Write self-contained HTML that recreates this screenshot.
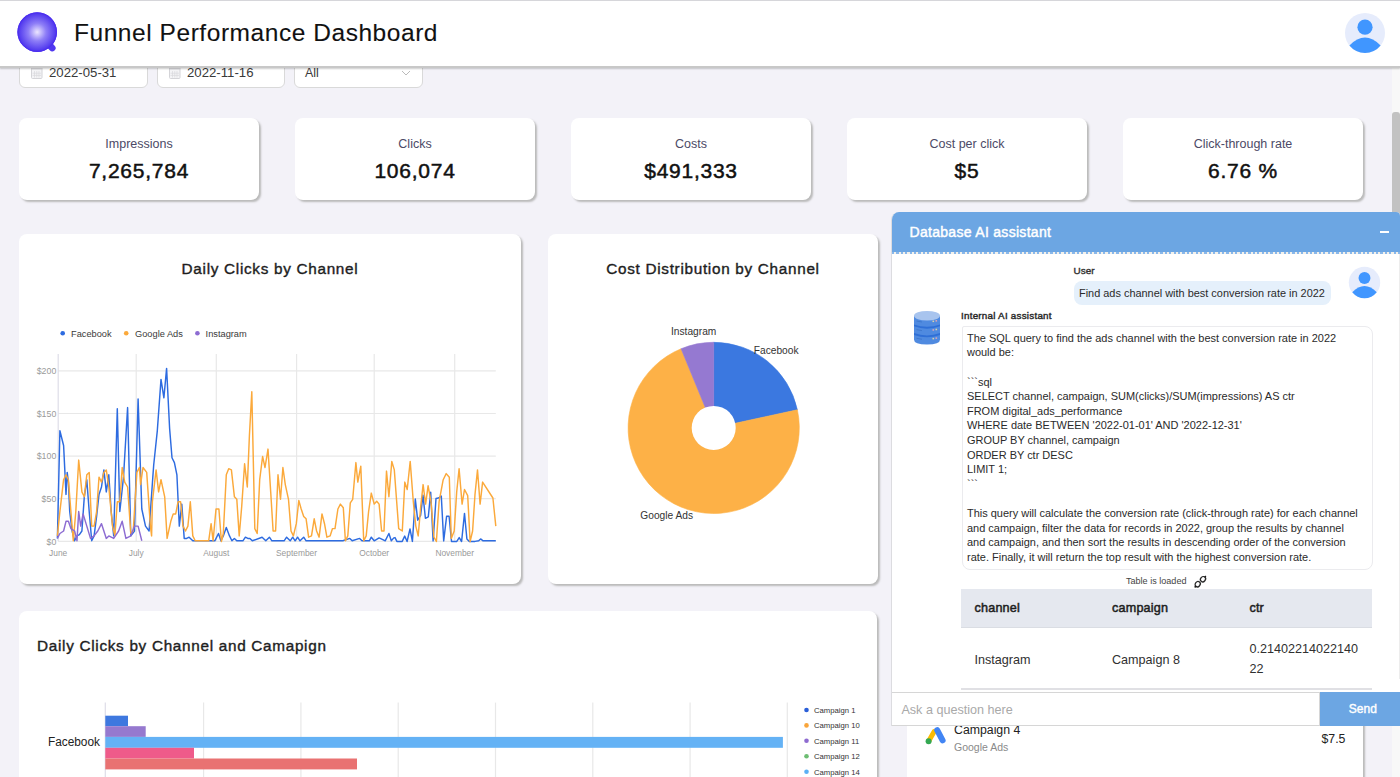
<!DOCTYPE html>
<html><head><meta charset="utf-8">
<style>
*{box-sizing:border-box;margin:0;padding:0}
html,body{width:1400px;height:777px;overflow:hidden}
body{background:#f3f2f8;font-family:"Liberation Sans",sans-serif;color:#1a1a1a;position:relative}
.abs{position:absolute}
.t{position:absolute;white-space:nowrap;line-height:1}
#topline{left:0;top:0;width:1400px;height:1px;background:#d6d6da;z-index:6}
#header{left:0;top:1px;width:1400px;height:67px;background:#fff;border-bottom:2px solid #c8c8c8;box-shadow:0 1px 1.5px rgba(0,0,0,0.2);z-index:5}
.inp{top:50px;height:38px;background:#fff;border:1px solid #d9d9d9;border-radius:6px}
.card{background:#fff;border-radius:8px;box-shadow:2px 2px 2px #bababa}
.kpi{top:118px;width:240px;height:82px}
.kpi .l{position:absolute;left:0;width:100%;text-align:center;top:20px;font-size:12.5px;line-height:1;color:#4c4a66}
.kpi .v{position:absolute;left:0;width:100%;text-align:center;top:160px;font-size:21px;line-height:1;color:#111;-webkit-text-stroke:0.5px #111;letter-spacing:0.75px}
.ctitle{position:absolute;font-size:15.3px;line-height:1;color:#1e1e1e;-webkit-text-stroke:0.38px #1e1e1e;white-space:nowrap;letter-spacing:0.7px}
.sb{-webkit-text-stroke:0.35px currentColor}
#chat{left:891px;top:212px;width:509px;height:514px;background:#fff;border-radius:8px 4px 0 0;z-index:10;border-left:1px solid #dcdce0;overflow:hidden}
#chathead{left:0;top:0;width:509px;height:40px;background:#6ca6e3}
.msg{font-size:10.9px;line-height:14.6px;color:#2a2a2a}
</style></head><body>
<div id="topline" class="abs"></div>
<div id="header" class="abs">
  <svg class="abs" style="left:15px;top:9px" width="46" height="46" viewBox="0 0 46 46">
    <defs><radialGradient id="lg" cx="0.5" cy="0.5" r="0.5"><stop offset="0" stop-color="#ece6ff"/><stop offset="0.45" stop-color="#8e7ef7"/><stop offset="0.88" stop-color="#5841ef"/><stop offset="1" stop-color="#4a2cee"/></radialGradient></defs>
    <path d="M34.5 35.2 L37.2 38" stroke="#5038ef" stroke-width="6.8" stroke-linecap="round"/>
    <circle cx="22.2" cy="22.1" r="19.8" fill="url(#lg)"/>
    <circle cx="22.2" cy="22.1" r="19.3" fill="none" stroke="#4b2ff0" stroke-width="1"/>
  </svg>
  <div class="t" style="left:74px;top:20px;font-size:24.5px;letter-spacing:0.55px;color:#111;-webkit-text-stroke:0.1px #111">Funnel Performance Dashboard</div>
  <svg class="abs" style="left:1344px;top:11.3px" width="42" height="42" viewBox="0 0 42 42">
    <circle cx="21" cy="21" r="20" fill="#e6ecfc"/>
    <circle cx="21" cy="15.2" r="7.6" fill="#4096ff"/>
    <path d="M5.4 33.5 Q21 17.6 36.6 33.5 A20 20 0 0 1 5.4 33.5Z" fill="#4096ff"/>
  </svg>
</div>

<div class="abs inp" style="left:19px;width:129px">
  <svg class="abs" style="left:10.5px;top:15px" width="12" height="13" viewBox="0 0 12 13"><rect x="0.5" y="0.5" width="10.5" height="12" rx="1" fill="#f4f4f6" stroke="#d4d4d8"/><rect x="0.5" y="0.5" width="10.5" height="3" fill="#dcdce0"/><path d="M3.5 5 V11.5 M5.75 5 V11.5 M8 5 V11.5 M1.5 7.2 H10 M1.5 9.4 H10" stroke="#d8d8dc" stroke-width="0.7"/></svg>
  <div class="t" style="left:29px;top:15px;font-size:13.2px;color:#3a3a3a">2022-05-31</div>
</div>
<div class="abs inp" style="left:157px;width:128px">
  <svg class="abs" style="left:10.5px;top:15px" width="12" height="13" viewBox="0 0 12 13"><rect x="0.5" y="0.5" width="10.5" height="12" rx="1" fill="#f4f4f6" stroke="#d4d4d8"/><rect x="0.5" y="0.5" width="10.5" height="3" fill="#dcdce0"/><path d="M3.5 5 V11.5 M5.75 5 V11.5 M8 5 V11.5 M1.5 7.2 H10 M1.5 9.4 H10" stroke="#d8d8dc" stroke-width="0.7"/></svg>
  <div class="t" style="left:29px;top:15px;font-size:13.2px;color:#3a3a3a">2022-11-16</div>
</div>
<div class="abs inp" style="left:294px;width:129px">
  <div class="t" style="left:10px;top:16px;font-size:12.4px;color:#3a3a3a">All</div>
  <svg class="abs" style="left:106px;top:19px" width="10" height="6" viewBox="0 0 10 6"><path d="M1 1 L5 5 L9 1" fill="none" stroke="#bbb" stroke-width="1"/></svg>
</div>

<div class="abs card kpi" style="left:19px"><div class="l">Impressions</div><div class="v" style="top:41.5px">7,265,784</div></div>
<div class="abs card kpi" style="left:295px"><div class="l">Clicks</div><div class="v" style="top:41.5px">106,074</div></div>
<div class="abs card kpi" style="left:571px"><div class="l">Costs</div><div class="v" style="top:41.5px">$491,333</div></div>
<div class="abs card kpi" style="left:847px"><div class="l">Cost per click</div><div class="v" style="top:41.5px">$5</div></div>
<div class="abs card kpi" style="left:1123px"><div class="l">Click-through rate</div><div class="v" style="top:41.5px">6.76 %</div></div>

<div class="abs card" style="left:19px;top:233.5px;width:502px;height:350px">
  <div class="ctitle" style="left:0;width:100%;text-align:center;top:27.5px">Daily Clicks by Channel</div>
</div>
<div class="abs card" style="left:548px;top:233.5px;width:330px;height:350px">
  <div class="ctitle" style="left:0;width:100%;text-align:center;top:27.5px">Cost Distribution by Channel</div>
</div>
<div class="abs card" style="left:19px;top:611px;width:858px;height:220px">
  <div class="ctitle" style="left:18px;top:27px">Daily Clicks by Channel and Camapign</div>
</div>
<div class="abs card" style="left:907px;top:611px;width:456px;height:220px">
  <svg class="abs" style="left:17.5px;top:115.5px" width="22" height="18" viewBox="0 0 22 18">
    <path d="M3.6 14.2 L9.2 4.6" stroke="#fbbc04" stroke-width="5" stroke-linecap="round"/>
    <path d="M12.2 3.2 L17.6 13.4" stroke="#4285f4" stroke-width="6" stroke-linecap="round"/>
    <circle cx="3.6" cy="14.2" r="3" fill="#34a853"/>
  </svg>
  <div class="t" style="left:47px;top:113px;font-size:12.3px;color:#222">Campaign 4</div>
  <div class="t" style="left:47px;top:131px;font-size:10.5px;color:#8a8a8a">Google Ads</div>
  <div class="t" style="left:414.5px;top:121.5px;font-size:12.3px;color:#222">$7.5</div>
</div>

<svg class="abs" style="left:0;top:0;z-index:3" width="1400" height="777" viewBox="0 0 1400 777">
<line x1="58.2" y1="370.9" x2="495.8" y2="370.9" stroke="#e8e8e8" stroke-width="1.2"/>
<line x1="58.2" y1="413.5" x2="495.8" y2="413.5" stroke="#e8e8e8" stroke-width="1.2"/>
<line x1="58.2" y1="456.1" x2="495.8" y2="456.1" stroke="#e8e8e8" stroke-width="1.2"/>
<line x1="58.2" y1="498.7" x2="495.8" y2="498.7" stroke="#e8e8e8" stroke-width="1.2"/>
<line x1="58.2" y1="541.3" x2="495.8" y2="541.3" stroke="#e8e8e8" stroke-width="1.2"/>
<line x1="136.2" y1="354" x2="136.2" y2="541.3" stroke="#e8e8e8" stroke-width="1.2"/>
<line x1="216.3" y1="354" x2="216.3" y2="541.3" stroke="#e8e8e8" stroke-width="1.2"/>
<line x1="296.6" y1="354" x2="296.6" y2="541.3" stroke="#e8e8e8" stroke-width="1.2"/>
<line x1="374.2" y1="354" x2="374.2" y2="541.3" stroke="#e8e8e8" stroke-width="1.2"/>
<line x1="454.7" y1="354" x2="454.7" y2="541.3" stroke="#e8e8e8" stroke-width="1.2"/>
<line x1="58.2" y1="354" x2="58.2" y2="541.3" stroke="#dedde8" stroke-width="1.2"/>
<text x="56.3" y="374.1" text-anchor="end" font-size="8.8" fill="#9a9a9a" font-family="Liberation Sans">$200</text>
<text x="56.3" y="416.7" text-anchor="end" font-size="8.8" fill="#9a9a9a" font-family="Liberation Sans">$150</text>
<text x="56.3" y="459.3" text-anchor="end" font-size="8.8" fill="#9a9a9a" font-family="Liberation Sans">$100</text>
<text x="56.3" y="501.9" text-anchor="end" font-size="8.8" fill="#9a9a9a" font-family="Liberation Sans">$50</text>
<text x="56.3" y="544.5" text-anchor="end" font-size="8.8" fill="#9a9a9a" font-family="Liberation Sans">$0</text>
<text x="58.2" y="555.6" text-anchor="middle" font-size="8.4" fill="#9a9a9a" font-family="Liberation Sans">June</text>
<text x="136.2" y="555.6" text-anchor="middle" font-size="8.4" fill="#9a9a9a" font-family="Liberation Sans">July</text>
<text x="216.3" y="555.6" text-anchor="middle" font-size="8.4" fill="#9a9a9a" font-family="Liberation Sans">August</text>
<text x="296.5" y="555.6" text-anchor="middle" font-size="8.4" fill="#9a9a9a" font-family="Liberation Sans">September</text>
<text x="374.2" y="555.6" text-anchor="middle" font-size="8.4" fill="#9a9a9a" font-family="Liberation Sans">October</text>
<text x="454.7" y="555.6" text-anchor="middle" font-size="8.4" fill="#9a9a9a" font-family="Liberation Sans">November</text>
<circle cx="62.7" cy="333.3" r="2.3" fill="#2d6be0"/>
<text x="71" y="336.6" font-size="9.25" fill="#3a3a3a" font-family="Liberation Sans">Facebook</text>
<circle cx="126.2" cy="333.3" r="2.3" fill="#fba93b"/>
<text x="135" y="336.6" font-size="9.25" fill="#3a3a3a" font-family="Liberation Sans">Google Ads</text>
<circle cx="197.4" cy="333.3" r="2.3" fill="#8d6cd2"/>
<text x="205.6" y="336.6" font-size="9.25" fill="#3a3a3a" font-family="Liberation Sans">Instagram</text>
<polyline points="57.4,538.4 59.9,430.8 63.6,445.5 64.8,469.9 66.0,494.4 67.2,472.4 68.4,482.1 69.7,511.5 72.1,531.0 74.6,540.8 77.0,535.9 79.4,534.7 81.9,531.0 84.3,496.8 86.8,479.7 89.2,511.5 91.7,540.8 94.1,535.9 96.6,516.4 99.0,494.4 101.5,487.0 103.9,469.9 106.3,491.9 108.8,474.8 111.2,511.5 113.7,535.9 117.3,408.8 119.8,511.5 123.5,477.2 127.6,407.6 130.8,535.9 134.5,531.0 138.1,399.0 141.8,509.0 145.5,526.1 149.1,531.0 152.8,477.2 153.7,465.0 157.3,430.8 161.0,379.4 163.9,397.8 166.6,368.4 169.6,428.3 172.0,457.7 174.4,462.6 176.9,474.8 179.3,526.1 181.8,504.1 184.2,538.4 186.7,538.4 189.1,537.2 192.8,540.8 208.7,540.8 214.8,540.8 218.5,533.5 220.9,540.8 223.3,535.9 226.3,527.4 229.5,535.9 231.9,540.8 234.4,538.4 236.8,540.8 242.9,540.8 245.4,537.2 247.8,538.4 249.9,538.4 252.3,540.8 262.1,537.2 265.8,540.8 269.4,537.2 271.9,540.8 284.1,540.8 286.6,537.2 290.2,540.8 292.7,537.2 295.1,540.8 297.6,537.2 300.0,540.8 303.7,537.2 306.1,540.8 342.8,540.8 349.8,538.4 352.2,540.8 359.6,538.4 362.0,540.8 369.3,540.8 371.3,537.2 374.2,540.8 379.1,537.9 382.8,539.6 385.2,540.8 388.9,533.5 391.3,540.8 393.8,537.9 395.0,537.6 396.9,541.4 402.2,541.4 404.7,536.1 407.1,541.5 410.0,528.9 412.4,541.4 415.3,499.0 417.7,520.2 420.6,515.4 423.0,495.1 425.4,518.3 428.3,516.8 430.7,492.2 433.1,540.9 436.0,498.5 438.4,498.0 441.3,496.1 443.7,540.9 446.6,516.3 449.1,516.3 451.5,541.4 456.8,541.4 459.2,537.6 461.6,541.5 464.5,513.4 466.9,539.0 469.3,541.4 475.0,541.4 478.7,540.8 480.6,538.9 483.1,540.8 495.8,540.8" fill="none" stroke="#2d6be0" stroke-width="1.45" stroke-linejoin="round"/>
<polyline points="57.4,535.9 59.9,511.5 63.6,479.7 66.0,474.8 68.4,479.7 70.9,511.5 73.3,540.8 75.8,511.5 78.7,460.1 81.9,491.9 84.3,496.8 86.8,474.8 89.2,472.4 91.7,526.1 94.1,526.1 96.6,511.5 99.0,477.2 101.5,482.1 103.9,472.4 106.3,469.9 108.8,487.0 112.5,526.1 114.9,535.9 117.3,501.7 119.8,501.7 122.2,467.5 124.7,482.1 127.6,487.0 130.8,533.5 133.2,531.0 136.9,472.4 139.4,467.5 140.6,484.6 143.0,467.5 146.7,472.4 150.4,526.1 151.6,535.9 152.4,501.7 156.1,469.9 158.6,491.9 161.0,479.7 164.7,496.8 167.1,538.4 170.8,521.3 173.2,513.9 175.7,513.9 178.1,501.7 180.6,501.7 183.0,526.1 185.5,531.0 187.9,526.1 190.3,501.7 192.8,535.9 195.2,540.8 208.7,540.8 211.1,523.7 213.1,540.8 216.0,509.0 218.9,509.0 221.4,541.5 223.3,533.5 226.3,474.8 228.7,468.7 231.4,469.9 234.4,496.8 236.8,499.3 239.2,535.9 241.7,506.6 244.6,463.8 247.3,487.0 249.4,435.7 251.8,391.7 254.8,528.6 257.2,533.5 259.7,479.7 262.6,456.5 265.0,467.5 268.0,449.1 270.7,491.9 273.1,531.0 275.6,531.0 278.0,474.8 280.5,499.3 282.9,467.5 285.3,484.6 288.5,499.3 291.0,531.0 293.4,535.9 296.3,523.7 298.8,500.5 301.2,509.0 303.7,516.4 306.1,518.8 308.6,537.2 311.5,535.9 314.2,518.8 316.6,531.0 319.1,537.2 322.0,513.9 324.5,523.7 326.9,537.2 330.1,535.9 332.5,528.6 335.0,528.6 337.9,509.0 340.4,504.1 343.3,507.8 345.4,540.8 347.8,535.9 350.3,502.9 352.7,499.3 355.9,462.6 357.8,482.1 360.8,466.2 363.7,540.8 366.2,535.9 368.6,511.5 371.3,493.1 374.2,504.1 376.7,501.2 379.1,504.1 381.6,531.0 384.0,531.0 386.5,471.1 388.9,496.8 391.8,461.4 394.3,469.9 398.7,528.6 402.3,531.0 404.8,482.1 407.2,489.5 410.2,461.4 413.3,501.7 415.8,526.1 418.2,535.9 420.7,506.6 423.1,484.6 425.6,504.1 428.1,485.8 431.0,501.7 433.9,537.2 436.4,541.5 439.1,501.7 443.2,479.7 446.2,473.6 449.3,477.2 451.3,538.4 454.2,531.0 456.7,491.9 459.1,468.7 462.1,504.1 464.5,489.5 467.7,495.6 470.1,541.5 472.6,531.0 475.0,494.4 477.5,469.9 480.1,504.1 482.6,482.1 492.9,498.0 495.8,526.1" fill="none" stroke="#fba93b" stroke-width="1.45" stroke-linejoin="round"/>
<polyline points="57.4,538.4 59.9,533.5 63.6,531.0 66.0,521.3 68.4,521.3 70.9,528.6 74.6,531.0 77.0,540.8 78.7,511.5 80.7,526.1 83.1,513.9 86.8,526.1 90.5,538.4 94.1,535.9 97.8,531.0 101.5,523.7 106.3,538.4 108.8,535.9 113.7,538.4 118.6,531.0 122.2,521.3 125.9,538.4 130.8,535.9 134.5,526.1 138.1,526.1 141.8,540.8" fill="none" stroke="#8d6cd2" stroke-width="1.45" stroke-linejoin="round"/>
<path d="M713.70,427.90 L713.70,342.30 A85.6,85.6 0 0 1 797.37,409.81 Z" fill="#3b78e0" stroke="#3b78e0" stroke-width="0.6" stroke-linejoin="round"/>
<path d="M713.70,427.90 L797.37,409.81 A85.6,85.6 0 1 1 681.08,348.76 Z" fill="#fdb147" stroke="#fdb147" stroke-width="0.6" stroke-linejoin="round"/>
<path d="M713.70,427.90 L681.08,348.76 A85.6,85.6 0 0 1 713.70,342.30 Z" fill="#9579d1" stroke="#9579d1" stroke-width="0.6" stroke-linejoin="round"/>
<circle cx="713.7" cy="427.9" r="22" fill="#fff"/>
<text x="671" y="334.5" font-size="10.2" fill="#333" font-family="Liberation Sans">Instagram</text>
<text x="753.8" y="354.1" font-size="10.2" fill="#333" font-family="Liberation Sans">Facebook</text>
<text x="640.3" y="518.5" font-size="10.2" fill="#333" font-family="Liberation Sans">Google Ads</text>
<line x1="203.6" y1="702.6" x2="203.6" y2="777" stroke="#e8e8e8" stroke-width="1.2"/>
<line x1="300.9" y1="702.6" x2="300.9" y2="777" stroke="#e8e8e8" stroke-width="1.2"/>
<line x1="398.2" y1="702.6" x2="398.2" y2="777" stroke="#e8e8e8" stroke-width="1.2"/>
<line x1="495.5" y1="702.6" x2="495.5" y2="777" stroke="#e8e8e8" stroke-width="1.2"/>
<line x1="592.8" y1="702.6" x2="592.8" y2="777" stroke="#e8e8e8" stroke-width="1.2"/>
<line x1="690.1" y1="702.6" x2="690.1" y2="777" stroke="#e8e8e8" stroke-width="1.2"/>
<line x1="787.3" y1="702.6" x2="787.3" y2="777" stroke="#e8e8e8" stroke-width="1.2"/>
<line x1="105.3" y1="702.6" x2="105.3" y2="777" stroke="#dedde8" stroke-width="1.2"/>
<rect x="105.3" y="715.7" width="22.7" height="10.5" fill="#3e78df"/>
<rect x="105.3" y="726.2" width="40.4" height="10.7" fill="#9679cf"/>
<rect x="105.3" y="736.9" width="677.6" height="10.9" fill="#64b2f5"/>
<rect x="105.3" y="747.8" width="88.7" height="10.7" fill="#ef5b8a"/>
<rect x="105.3" y="758.5" width="251.7" height="10.9" fill="#e97272"/>
<text x="100" y="746" text-anchor="end" font-size="11.86" fill="#222" font-family="Liberation Sans">Facebook</text>
<circle cx="806.5" cy="710.0" r="2.3" fill="#2a5fd8"/>
<text x="814" y="712.8" font-size="7.7" fill="#333" font-family="Liberation Sans">Campaign 1</text>
<circle cx="806.5" cy="725.4" r="2.3" fill="#f9a53a"/>
<text x="814" y="728.2" font-size="7.7" fill="#333" font-family="Liberation Sans">Campaign 10</text>
<circle cx="806.5" cy="740.8" r="2.3" fill="#8e6bd0"/>
<text x="814" y="743.6" font-size="7.7" fill="#333" font-family="Liberation Sans">Campaign 11</text>
<circle cx="806.5" cy="756.3" r="2.3" fill="#6dbd72"/>
<text x="814" y="759.1" font-size="7.7" fill="#333" font-family="Liberation Sans">Campaign 12</text>
<circle cx="806.5" cy="771.7" r="2.3" fill="#5ab0f5"/>
<text x="814" y="774.5" font-size="7.7" fill="#333" font-family="Liberation Sans">Campaign 14</text>
</svg>

<div class="abs" style="left:1392px;top:68px;width:8px;height:709px;background:#f8f8f8;z-index:4"></div>
<div class="abs" style="left:1392px;top:111.5px;width:8px;height:360px;background:#c2c2c2;border-radius:3px 3px 0 0;z-index:4"></div>

<div id="chat" class="abs">
  <div id="chathead" class="abs">
    <div class="t" style="left:17.5px;top:13.2px;font-size:14px;color:#fff;-webkit-text-stroke:0.45px #fff;letter-spacing:0.3px">Database AI assistant</div>
    <div class="abs" style="left:488px;top:19px;width:9px;height:2px;background:#fff"></div>
  </div>
  <div class="abs" style="left:0;top:40px;width:509px;height:1.5px;background:repeating-linear-gradient(90deg,#8ab8ea 0 2.2px,#f4f1ea 2.2px 4.4px)"></div>
<div class="t" style="left:181.6px;top:53.6px;font-size:9.9px;color:#333;-webkit-text-stroke:0.4px #333">User</div>
<div class="abs" style="left:181.6px;top:69px;width:257px;height:24px;background:#e5f0fb;border-radius:8px"></div>
<div class="t" style="left:187.0px;top:76.1px;font-size:10.93px;color:#2a2a2a">Find ads channel with best conversion rate in 2022</div>
<svg class="abs" style="left:456.2px;top:53.9px" width="33" height="33" viewBox="0 0 42 42">
    <circle cx="21" cy="21" r="20" fill="#e6ecfc"/>
    <circle cx="21" cy="15.2" r="7.6" fill="#4096ff"/>
    <path d="M5.4 33.5 Q21 17.6 36.6 33.5 A20 20 0 0 1 5.4 33.5Z" fill="#4096ff"/>
  </svg>
<svg class="abs" style="left:21px;top:97.5px" width="28" height="35.5" viewBox="0 0 28 37" preserveAspectRatio="none">
  <path d="M1 6 L1 31 Q1 36 14 36 Q27 36 27 31 L27 6Z" fill="#4f8ae0"/>
  <path d="M1 15 Q14 20 27 15 L27 17 Q14 22 1 17Z" fill="#2f6fd6"/>
  <path d="M1 24 Q14 29 27 24 L27 26 Q14 31 1 26Z" fill="#2f6fd6"/>
  <ellipse cx="14" cy="6" rx="13" ry="5" fill="#a8c4ee"/>
  <rect x="19.5" y="11" width="1.6" height="1.6" fill="#d9d3a8"/><rect x="22.5" y="10.5" width="1.6" height="1.6" fill="#dba6b8"/><path d="M3.5 11.5 L9 12.5" stroke="#3b73c8" stroke-width="0.8"/>
  <rect x="19.5" y="20" width="1.6" height="1.6" fill="#dba6b8"/><rect x="22.5" y="19.5" width="1.6" height="1.6" fill="#d9d3a8"/><path d="M3.5 20.5 L9 21.5" stroke="#3b73c8" stroke-width="0.8"/>
  <rect x="19.5" y="29" width="1.6" height="1.6" fill="#d9d3a8"/><rect x="22.5" y="28.5" width="1.6" height="1.6" fill="#dba6b8"/><path d="M3.5 29.5 L9 30.5" stroke="#3b73c8" stroke-width="0.8"/>
</svg>
<div class="t" style="left:69.0px;top:98.6px;font-size:9.8px;color:#262626;-webkit-text-stroke:0.4px #262626;letter-spacing:0.25px">Internal AI assistant</div>
<div class="abs" style="left:69.6px;top:113.5px;width:411px;height:244px;border:1px solid #ebebee;border-radius:2px 8px 8px 8px"></div>
<div class="abs msg" style="left:75px;top:118.9px;font-size:10.98px;white-space:nowrap">The SQL query to find the ads channel with the best conversion rate in 2022<br>would be:<br>&nbsp;<br>```sql<br>SELECT channel, campaign, SUM(clicks)/SUM(impressions) AS ctr<br>FROM digital_ads_performance<br>WHERE date BETWEEN '2022-01-01' AND '2022-12-31'<br>GROUP BY channel, campaign<br>ORDER BY ctr DESC<br>LIMIT 1;<br>```<br>&nbsp;<br>This query will calculate the conversion rate (click-through rate) for each channel<br>and campaign, filter the data for records in 2022, group the results by channel<br>and campaign, and then sort the results in descending order of the conversion<br>rate. Finally, it will return the top result with the highest conversion rate.</div>
<div class="t" style="left:234.0px;top:365.3px;font-size:9.07px;color:#444">Table is loaded</div>
<svg class="abs" style="left:301px;top:362px" width="15" height="15" viewBox="0 0 15 15">
  <ellipse cx="4.7" cy="10.2" rx="2.4" ry="2.8" transform="rotate(40 4.7 10.2)" fill="none" stroke="#2a2a2a" stroke-width="1.3"/>
  <ellipse cx="10" cy="5.2" rx="2.4" ry="2.8" transform="rotate(40 10 5.2)" fill="none" stroke="#2a2a2a" stroke-width="1.3"/>
  <path d="M3 12.2 L1.6 13.4 M11.6 3.3 L12.9 2.1" stroke="#1a1a1a" stroke-width="1.5"/>
</svg>
<div class="abs" style="left:69px;top:377px;width:411px;height:39px;background:#e5e8ef;border-bottom:1px solid #dadde3"></div>
<div class="t" style="left:82.5px;top:390.1px;font-size:12.6px;color:#1e1e1e;-webkit-text-stroke:0.5px #1e1e1e;letter-spacing:0.2px">channel</div>
<div class="t" style="left:220.0px;top:390.1px;font-size:12.6px;color:#1e1e1e;-webkit-text-stroke:0.5px #1e1e1e;letter-spacing:0.2px">campaign</div>
<div class="t" style="left:357.4px;top:390.1px;font-size:12.6px;color:#1e1e1e;-webkit-text-stroke:0.5px #1e1e1e;letter-spacing:0.2px">ctr</div>
<div class="t" style="left:82.5px;top:441.6px;font-size:12.6px;color:#303030">Instagram</div>
<div class="t" style="left:220.0px;top:441.6px;font-size:12.6px;color:#303030">Campaign 8</div>
<div class="t" style="left:357.4px;top:430.7px;font-size:12.6px;color:#303030">0.21402214022140</div>
<div class="t" style="left:357.4px;top:450.6px;font-size:12.6px;color:#303030">22</div>
<div class="abs" style="left:69px;top:476px;width:411px;height:1.5px;background:#e0e0e4"></div>
<div class="abs" style="left:506.5px;top:42px;width:2px;height:425px;background:#ededed"></div>
<div class="abs" style="left:-1px;top:480.4px;width:429.3px;height:33.3px;background:#fff;border:1px solid #d6d6d6"></div>
<div class="t" style="left:9.4px;top:491.6px;font-size:12.6px;color:#a9a9a9">Ask a question here</div>
<div class="abs" style="left:428.3px;top:480.4px;width:81px;height:33.3px;background:#6ca6e3"></div>
<div class="t" style="left:456.8px;top:490.8px;font-size:12px;color:#fff;-webkit-text-stroke:0.4px #fff">Send</div>
</div>
</body></html>
